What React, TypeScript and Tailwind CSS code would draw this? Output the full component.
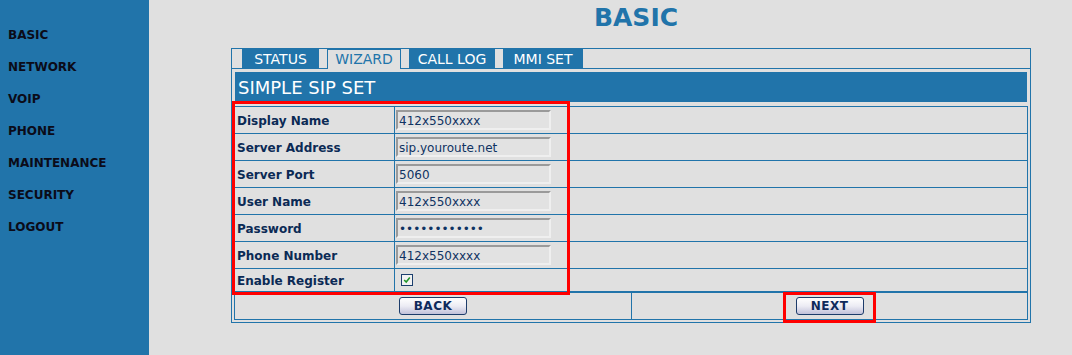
import { useState } from 'react';

const navItems = ['BASIC', 'NETWORK', 'VOIP', 'PHONE', 'MAINTENANCE', 'SECURITY', 'LOGOUT'];

const tabs = [
    { label: 'STATUS', w: 'w-[77px]' },
    { label: 'WIZARD', w: 'w-[74px]' },
    { label: 'CALL LOG', w: 'w-[86px]' },
    { label: 'MMI SET', w: 'w-[80px]' },
];

const fields = [
    { label: 'Display Name', value: '412x550xxxx' },
    { label: 'Server Address', value: 'sip.youroute.net' },
    { label: 'Server Port', value: '5060' },
    { label: 'User Name', value: '412x550xxxx' },
    { label: 'Password', value: '••••••••••••' },
    { label: 'Phone Number', value: '412x550xxxx' },
];

const PanelButton = ({ children }: { children: string }) => (
    <button className="w-[68px] h-[18px] rounded-[3px] border border-[#1d3c6a] bg-gradient-to-b from-white via-[#ececf4] to-[#c2c2da] text-[12px] leading-[16px] font-bold text-[#0e2a5c] tracking-[0.5px]">
        {children}
    </button>
);

export default function App() {
    const [register, setRegister] = useState(true);

    return (
        <div className="relative flex w-[1072px] h-[355px] bg-[#e0e0e0] font-['DejaVu_Sans',Verdana,sans-serif] overflow-hidden">
            <nav className="w-[149px] h-full bg-[#2174aa] pt-[19px]">
                {navItems.map((item) => (
                    <div key={item} className="pl-[8px] text-[12px] leading-8 font-bold text-[#0b0b18]">
                        {item}
                    </div>
                ))}
            </nav>

            <main className="flex-1 pl-[82px]">
                <h1 className="w-[800px] h-[48px] pt-[3px] pl-[10px] text-center text-[25px] leading-[30px] font-bold text-[#2174aa]">
                    BASIC
                </h1>

                <div className="w-[800px] h-[275px] border border-[#2174aa]">
                    {/* tabs */}
                    <div className="flex items-start gap-[8px] h-[20px] pl-[10px] border-b border-[#2174aa]">
                        {tabs.map((t) =>
                            t.label === 'WIZARD' ? (
                                <div
                                    key={t.label}
                                    className={`${t.w} h-[20px] border border-b-0 border-[#2174aa] bg-[#e0e0e0] text-center text-[14px] leading-[19px] text-[#2174aa]`}
                                >
                                    {t.label}
                                </div>
                            ) : (
                                <div
                                    key={t.label}
                                    className={`${t.w} h-[19px] bg-[#2174aa] text-center text-[14px] leading-[20px] text-white`}
                                >
                                    {t.label}
                                </div>
                            )
                        )}
                    </div>

                    <div className="mx-[3px] mt-[3px] h-[30px] bg-[#2174aa] pl-[3px] pt-[2px] text-[18px] leading-[28px] text-white">
                        SIMPLE SIP SET
                    </div>

                    {/* fields */}
                    <div className="mx-[2px] mt-[4px] border border-[#2174aa]">
                        {fields.map((f) => (
                            <div key={f.label} className="grid grid-cols-[160px_1fr] h-[27px] border-b border-[#2174aa]">
                                <div className="flex items-center pl-[2px] pt-px border-r border-[#2174aa] text-[12px] font-bold text-[#0b2a55]">
                                    {f.label}
                                </div>
                                <div className="flex items-center pl-px">
                                    <div className="w-[155px] h-[20px] flex items-center pl-[1px] pt-px border-2 border-t-[#9a9a9a] border-l-[#9a9a9a] border-b-[#efefef] border-r-[#efefef] bg-[#e2e2e2] text-[12px] text-[#0f3362]">
                                        {f.value}
                                    </div>
                                </div>
                            </div>
                        ))}
                        <div className="grid grid-cols-[160px_1fr] h-[22px]">
                            <div className="flex items-center pl-[2px] pt-px border-r border-[#2174aa] text-[12px] font-bold text-[#0b2a55]">
                                Enable Register
                            </div>
                            <div className="flex items-center pl-[6px]">
                                <button
                                    onClick={() => setRegister(!register)}
                                    className="w-[12px] h-[12px] flex items-center justify-center border border-[#1c3f6e] bg-[#f2f2f2]"
                                >
                                    {register && (
                                        <svg viewBox="0 0 10 10" className="w-[8px] h-[8px]">
                                            <path d="M1.5 5 L4 7.5 L8.5 2" fill="none" stroke="#22962a" strokeWidth="2" />
                                        </svg>
                                    )}
                                </button>
                            </div>
                        </div>
                    </div>

                    {/* buttons */}
                    <div className="mx-[2px] grid grid-cols-[397px_1fr] h-[28px] border border-[#2174aa]">
                        <div className="flex items-center justify-center border-r border-[#2174aa]">
                            <PanelButton>BACK</PanelButton>
                        </div>
                        <div className="flex items-center justify-center">
                            <PanelButton>NEXT</PanelButton>
                        </div>
                    </div>
                </div>
            </main>

            {/* red highlight marks */}
            <div className="absolute left-[232px] top-[101px] w-[338px] h-[194px] border-[3px] border-[#ff0000] pointer-events-none" />
            <div className="absolute left-[783px] top-[292px] w-[93px] h-[31px] border-[3px] border-[#ff0000] pointer-events-none" />
        </div>
    );
}
